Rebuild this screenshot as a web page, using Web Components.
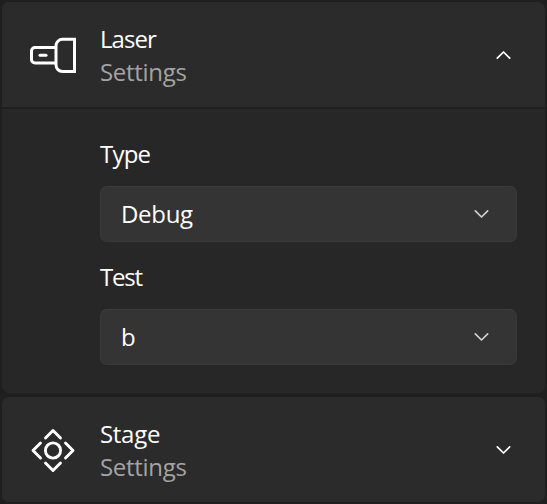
<!DOCTYPE html>
<html lang="en">
<head>
<meta charset="utf-8">
<title>Settings</title>
<style>
html, body { margin: 0; height: 100%; background: #1f1f1f; }
body { overflow: hidden; color: #fff; font: 24px/33px "Open Sans", "Noto Sans", sans-serif; letter-spacing: -.3px; }
</style>
</head>
<body>
<settings-list>
  <settings-expander heading="Laser" open style="--heading-spacing:-.95px">
    <laser-icon slot="icon"></laser-icon>
    <combo-field label="Type" value="Debug" style="--label-spacing:-.8px"></combo-field>
    <combo-field label="Test" value="b" style="--label-spacing:-1.2px"></combo-field>
  </settings-expander>
  <settings-expander heading="Stage">
    <stage-icon slot="icon"></stage-icon>
  </settings-expander>
</settings-list>
<script>
const define = (name, html) => customElements.define(name, class extends HTMLElement {
  constructor() {
    super();
    const t = document.createElement('template');
    t.innerHTML = html;
    this.attachShadow({ mode: 'open' }).append(t.content.cloneNode(true));
  }
  connectedCallback() {
    this.shadowRoot.querySelectorAll('[data-attr]').forEach(el => {
      el.textContent = this.getAttribute(el.dataset.attr);
    });
  }
});

define('chevron-icon', `
<style>:host{display:block;width:16px;height:10px} :host([up]){transform:scaleY(-1)} svg{display:block}</style>
<svg width="16" height="10" viewBox="0 0 16 10" fill="none" stroke="currentColor" stroke-width="1.7" stroke-linecap="round" stroke-linejoin="round"><path d="M1.3 1.8 7.5 8 13.7 1.8"/></svg>`);

define('laser-icon', `
<style>:host{display:block;width:48px;height:48px} svg{display:block}</style>
<svg width="48" height="48" viewBox="0 0 48 48" fill="none" stroke="currentColor" stroke-width="3"><path d="M28.5 16.5H8a3.5 3.5 0 0 0-3.5 3.5v8.5A3.5 3.5 0 0 0 8 32H28.500M47.500 8.300V40.500H35.500a6.500 6.500 0 0 1-6.500-6.500V14.800a6.500 6.500 0 0 1 6.500-6.500z" transform="translate(-1 0)"/><path d="M12.500 24.200h6" stroke-linecap="round" transform="translate(-.5 0)"/></svg>`);

define('stage-icon', `
<style>:host{display:block;width:48px;height:48px} svg{display:block}</style>
<svg width="48" height="48" viewBox="0 0 48 48" fill="none" stroke="currentColor" stroke-width="2.9" stroke-linecap="round" stroke-linejoin="round"><circle cx="25" cy="24.500" r="7.600"/><path d="M17.500 12 25 4.500 32.500 12M17.500 37 25 44.500 32.500 37M12.500 17 5 24.500 12.500 32M37.500 17 45 24.500 37.500 32"/></svg>`);

define('combo-field', `
<style>
:host{display:flex;flex-direction:column;gap:16px}
.label{letter-spacing:var(--label-spacing)}
.box{display:flex;align-items:center;justify-content:space-between;box-sizing:border-box;height:56px;padding:0 26px 0 20px;border:1px solid #393939;border-top-color:#3c3c3c;border-radius:7px;background:#343434}
.value{padding-bottom:2px}
chevron-icon{color:#cfcfcf}
</style>
<span class="label" data-attr="label"></span>
<div class="box"><span class="value" data-attr="value"></span><chevron-icon></chevron-icon></div>`);

define('settings-expander', `
<style>
:host{display:flex;flex-direction:column;gap:2px}
header{display:flex;align-items:center;box-sizing:border-box;height:105px;padding:0 33px 0 26px;background:#2b2b2b;border-radius:7px}
:host([open]) header{border-radius:7px 7px 0 0}
.titles{display:flex;flex-direction:column;flex:1;margin-left:24px}
.heading{letter-spacing:var(--heading-spacing,-.3px)}
.sub{color:#a3a3a3}
.body{display:none}
:host([open]) .body{display:flex;flex-direction:column;gap:18px;box-sizing:border-box;height:284px;padding:28px 28px 0 98px;background:#272727;border-radius:0 0 7px 7px}
.up{display:none}
:host([open]) .up{display:block}
:host([open]) .down{display:none}
</style>
<header>
<slot name="icon"></slot>
<div class="titles"><span class="heading" data-attr="heading"></span><span class="sub">Settings</span></div>
<chevron-icon class="up" up></chevron-icon><chevron-icon class="down"></chevron-icon>
</header>
<div class="body"><slot></slot></div>`);

define('settings-list', `
<style>:host{display:flex;flex-direction:column;gap:4px;padding:2px}</style><slot></slot>`);
</script>
</body>
</html>
